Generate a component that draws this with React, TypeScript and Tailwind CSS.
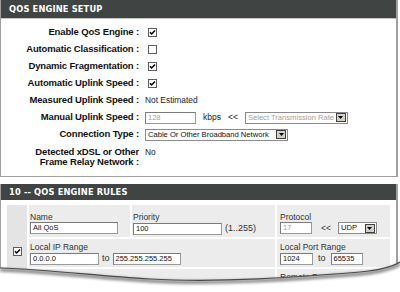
import React from "react";

const CB = ({ checked }: { checked: boolean }) => (
  <svg width="9" height="9" viewBox="0 0 9 9" className="block shrink-0">
    <rect x="0.5" y="0.5" width="8" height="8" fill="#fff" stroke="#5e5e5e" />
    {checked && <path d="M2 4.2 L3.6 6 L7 2.4" fill="none" stroke="#000" strokeWidth="1.5" />}
  </svg>
);

const Arrow = () => (
  <div className="h-[9px] w-[10px] shrink-0 bg-[#d4d0c8] border border-[#404040] flex items-center justify-center">
    <svg width="5" height="3" viewBox="0 0 5 3">
      <path d="M0 0H5L2.5 3Z" fill="#000" />
    </svg>
  </div>
);

function Field({ cls, value, muted }: { cls: string; value: string; muted?: boolean }) {
  return (
    <div
      className={
        "h-[12px] border border-[#9a9a9a] border-t-[#7a7a7a] border-l-[#7a7a7a] bg-white pl-[2px] text-[7.5px] leading-[10px] whitespace-nowrap overflow-hidden " +
        cls +
        (muted ? " text-[#a0a0a0]" : " text-[#111]")
      }
    >
      {value}
    </div>
  );
}

function Select({ cls, value, muted }: { cls: string; value: string; muted?: boolean }) {
  return (
    <div className={"h-[12px] border border-[#8a8a8a] bg-white flex items-center justify-between pl-[2px] pr-[1px] " + cls}>
      <span className={"text-[7.6px] leading-[10px] whitespace-nowrap " + (muted ? "text-[#a0a0a0]" : "text-[#111]")}>{value}</span>
      <Arrow />
    </div>
  );
}

function Row({ label, children }: { label: string; children: React.ReactNode }) {
  return (
    <div className="flex items-center h-[17px]">
      <div className="w-[138px] text-right font-bold text-[9.5px] tracking-[-0.15px] text-[#111] whitespace-nowrap">{label}</div>
      <div className="ml-[6px] flex items-center text-[8px] text-[#333]">{children}</div>
    </div>
  );
}

const headFont = { fontFamily: '"DejaVu Sans", Verdana, sans-serif' };

export default function App() {
  return (
    <div className="relative w-[400px] h-[292px] overflow-hidden bg-white" style={{ fontFamily: '"Liberation Sans", Arial, sans-serif' }}>
      {/* Panel 1 */}
      <div className="w-[398px] border-l border-b border-r-2 border-[#a0a0a0]">
        <div
          className="h-[18px] bg-[#404443] border-b border-[#c4c4c4] flex items-center pl-[8px] text-white font-bold text-[8.3px] tracking-[0.15px] box-content"
          style={headFont}
        >
          QOS ENGINE SETUP
        </div>
        <div className="pt-[5px]">
          <Row label="Enable QoS Engine :">
            <div className="ml-[3px]"><CB checked /></div>
          </Row>
          <Row label="Automatic Classification :">
            <div className="ml-[3px]"><CB checked={false} /></div>
          </Row>
          <Row label="Dynamic Fragmentation :">
            <div className="ml-[3px]"><CB checked /></div>
          </Row>
          <Row label="Automatic Uplink Speed :">
            <div className="ml-[3px]"><CB checked /></div>
          </Row>
          <Row label="Measured Uplink Speed :">
            <span className="text-[8.4px] text-[#222]">Not Estimated</span>
          </Row>
          <Row label="Manual Uplink Speed :">
            <Field cls="w-[51px]" value="128" muted />
            <span className="ml-[7px] text-[8.5px] text-[#222]">kbps</span>
            <span className="ml-[7px] text-[8.5px] text-[#222]">&lt;&lt;</span>
            <Select cls="ml-[7px] w-[103px]" value="Select Transmission Rate" muted />
          </Row>
          <Row label="Connection Type :">
            <Select cls="w-[143px]" value="Cable Or Other Broadband Network" />
          </Row>
          <div className="flex items-start h-[33px] pt-[4px]">
            <div className="w-[138px] text-right font-bold text-[9.5px] tracking-[-0.15px] leading-[10px] text-[#111]">
              Detected xDSL or Other
              <br />
              Frame Relay Network :
            </div>
            <div className="ml-[6px] text-[8.4px] leading-[10px] text-[#222]">No</div>
          </div>
        </div>
      </div>

      {/* Panel 2 */}
      <div className="mt-[7px] w-[398px] border-l border-r-2 border-[#a0a0a0] h-[200px]">
        <div
          className="h-[16px] bg-[#404443] flex items-center pl-[8px] text-white font-bold text-[8.3px] tracking-[0.15px]"
          style={headFont}
        >
          10 -- QOS ENGINE RULES
        </div>
        <div className="pl-[6px] pr-[6px] pt-[5px]">
          <div className="grid grid-cols-[20px_101px_143px_1fr] gap-[2px] text-[8.5px] text-[#333]">
            <div className="row-span-3 bg-[#e4e4e4] flex items-center justify-center">
              <CB checked />
            </div>
            <div className="bg-[#ececec] h-[32px] pl-[1px] pt-[7px]">
              <div className="leading-[10px]">Name</div>
              <Field cls="w-[88px]" value="All QoS" />
            </div>
            <div className="bg-[#ececec] h-[32px] pl-[1px] pt-[7px]">
              <div className="leading-[10px]">Priority</div>
              <div className="flex items-center">
                <Field cls="w-[89px]" value="100" />
                <span className="ml-[3px] text-[9px]">(1..255)</span>
              </div>
            </div>
            <div className="bg-[#ececec] h-[32px] pl-[3px] pt-[7px]">
              <div className="leading-[10px]">Protocol</div>
              <div className="flex items-center">
                <Field cls="w-[32px]" value="17" muted />
                <span className="ml-[9px]">&lt;&lt;</span>
                <Select cls="ml-[7px] w-[39px]" value="UDP" />
              </div>
            </div>
            <div className="col-span-2 bg-[#ececec] h-[28px] pl-[1px] pt-[3px]">
              <div className="leading-[10px]">Local IP Range</div>
              <div className="flex items-center">
                <Field cls="w-[69px]" value="0.0.0.0" />
                <span className="mx-[3px] text-[9px]">to</span>
                <Field cls="w-[68px]" value="255.255.255.255" />
              </div>
            </div>
            <div className="bg-[#ececec] h-[28px] pl-[3px] pt-[3px]">
              <div className="leading-[10px]">Local Port Range</div>
              <div className="flex items-center">
                <Field cls="w-[33px]" value="1024" />
                <span className="mx-[5px] text-[9px]">to</span>
                <Field cls="w-[32px]" value="65535" />
              </div>
            </div>
            <div className="col-span-2 bg-[#ececec] h-[28px] pl-[1px] pt-[3px]">
              <div className="leading-[10px]">Remote IP Range</div>
              <div className="flex items-center">
                <Field cls="w-[69px]" value="0.0.0.0" />
                <span className="mx-[3px] text-[9px]">to</span>
                <Field cls="w-[68px]" value="255.255.255.255" />
              </div>
            </div>
            <div className="bg-[#ececec] h-[28px] pl-[3px] pt-[3px]">
              <div className="leading-[10px]">Remote Port Range</div>
              <div className="flex items-center">
                <Field cls="w-[33px]" value="0" />
                <span className="mx-[5px] text-[9px]">to</span>
                <Field cls="w-[32px]" value="65535" />
              </div>
            </div>
          </div>
        </div>
      </div>

      {/* torn paper edge */}
      <svg className="absolute left-0 top-[250px]" width="400" height="42" viewBox="0 0 400 42">
        <defs>
          <filter id="blur" x="-10%" y="-50%" width="120%" height="200%">
            <feGaussianBlur stdDeviation="1.6" />
          </filter>
        </defs>
        <path
          d="M0 18 C 50 20, 90 25, 150 29 C 220 33, 300 27, 360 22 C 380 20, 392 17, 400 12 L400 42 L0 42 Z"
          fill="#fff"
        />
        <path
          d="M0 20 C 50 22, 90 27, 150 31 C 220 35, 300 29, 360 24 C 380 22, 392 19, 400 14"
          fill="none"
          stroke="#777"
          strokeWidth="3"
          filter="url(#blur)"
        />
        <path
          d="M0 18 C 50 20, 90 25, 150 29 C 220 33, 300 27, 360 22 C 380 20, 392 17, 400 12"
          fill="none"
          stroke="#4a4a4a"
          strokeWidth="1.2"
        />
      </svg>
    </div>
  );
}
